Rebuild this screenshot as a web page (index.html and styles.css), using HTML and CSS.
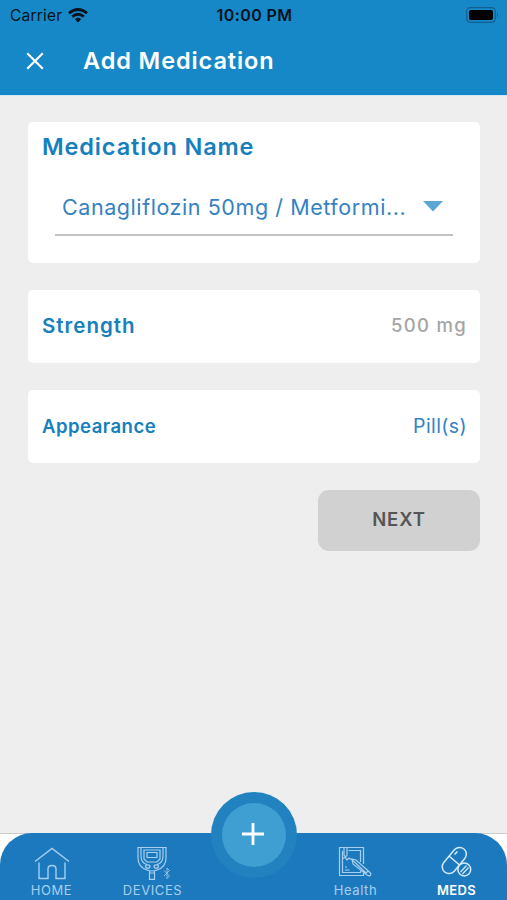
FILE: index.html
```html
<!DOCTYPE html>
<html lang="en">
<head>
  <meta charset="UTF-8" />
  <title>Add Medication</title>
  <link rel="stylesheet" href="styles.css">
</head>
<body>

  <header class="header">
    <div class="status-bar">
      <div class="carrier">
        <span>Carrier</span>
        <svg width="20" height="15" viewBox="0 0 20 15" fill="none" stroke="#06121c" stroke-width="2.8">
          <path d="M1 5.3Q10-2.3 19 5.3" />
          <path d="M4.2 8.8Q10 3.8 15.8 8.8" />
          <path d="M6.9 11.2Q10 8.4 13.1 11.2L10 14.5z" fill="#06121c" stroke="none" />
        </svg>
      </div>
      <span class="time">10:00 PM</span>
      <svg class="battery" width="33" height="16" viewBox="0 0 33 16">
        <rect x=".6" y=".6" width="28.8" height="14.8" rx="4" fill="none" stroke="#125f91" stroke-width="1.2" />
        <rect x="3" y="3" width="24" height="10" rx="2" fill="#000" />
        <path d="M31 5.5Q33 8 31 10.5z" fill="#125f91" />
      </svg>
    </div>
    <div class="title-bar">
      <svg class="close" width="18" height="18" viewBox="0 0 18 18" stroke="#fff" stroke-width="2.1">
        <path d="M1.2 1.2L16.8 16.8M16.8 1.2L1.2 16.8" />
      </svg>
      <h1>Add Medication</h1>
    </div>
  </header>

  <main class="content">
    <section class="card name-card">
      <h2>Medication Name</h2>
      <div class="select">
        <span>Canagliflozin 50mg / Metformi...</span>
        <svg width="20" height="11" viewBox="0 0 20 11"><path d="M0 0H20L10 10.5z" fill="#5ba6d5" /></svg>
      </div>
    </section>

    <section class="card row">
      <span class="label strength">Strength</span>
      <span class="value dose">500 mg</span>
    </section>

    <section class="card row">
      <span class="label appearance">Appearance</span>
      <span class="value pills">Pill(s)</span>
    </section>

    <button class="next">NEXT</button>
  </main>

  <div class="nav-wrap">
    <nav class="nav">
      <a class="tab home">
        <svg width="36" height="34" viewBox="0 0 36 34" stroke-width="1.4">
          <path d="M1 15.5L18 2.5L35 15.5M5 16.500V32.500H14V23Q14 19.500 18 19.500T22 23V32.500H31V16.500" />
        </svg>
        <span>HOME</span>
      </a>
      <a class="tab devices">
        <svg width="36" height="34" viewBox="0 0 36 34" stroke-width="1.2">
          <path d="M3 1.500H31V12Q31 21 22 24Q17 26 12 24Q3 21 3 12zM6 1.500V10Q6 17 12 18.500M28 1.500V10Q28 17 22 18.500" />
          <path d="M9 4H25V13L22 16H12L9 13zM12 6.500H22V11.500H12z" />
          <ellipse cx="12.800" cy="20.500" rx="2.200" ry="1.700" />
          <ellipse cx="21.200" cy="20.500" rx="2.200" ry="1.700" />
          <path d="M14.500 25V33.300H19.500V25M14.500 27H19.500" />
          <path d="M29 24.500L34.500 30L32 32.500V22L34.500 24.500L29 30" stroke-width=".8" />
        </svg>
        <span>DEVICES</span>
      </a>
      <a class="tab health">
        <svg width="36" height="34" viewBox="0 0 36 34" stroke-width="1.2">
          <path d="M25.500 18V1.500H1.500V29.500H25.500V27M22.500 16V4.500H10.500M4.500 5V26.500H22.500V25" />
          <path d="M6 1.500V9L7.500 11L9 9V1.500M4.500 12.500L7.500 11.500L9 14L11 12L13 13.500H16" />
          <path d="M14 13L18 14L32 26.500Q33.500 28 32.500 29.500Q31 30.500 29 29L15 18zM15 14.500L28 27M27 28L30 25" />
          <path d="M7 21H9M7 24H11.500" />
        </svg>
        <span>Health</span>
      </a>
      <a class="tab meds">
        <svg width="36" height="34" viewBox="0 0 36 34" stroke-width="1.5">
          <rect x="-6.800" y="-15" width="13.600" height="30" rx="6.800" transform="translate(15.300 14.500) rotate(40)" />
          <path d="M10 10L20.500 19M15.500 8.500L18.500 5.500" />
          <circle cx="25.300" cy="23.500" r="6.400" fill="#1d79bd" />
          <path d="M21.500 26L27.500 19.500M23.500 28L29.500 21.500" stroke-width="1.2" />
        </svg>
        <span>MEDS</span>
      </a>
    </nav>
    <div class="add">
      <div class="add-inner">
        <svg width="22" height="22" viewBox="0 0 22 22" stroke="#fff" stroke-width="2.8"><path d="M11 0V22M0 11H22" /></svg>
      </div>
    </div>
  </div>

</body>
</html>
```
FILE: styles.css
```css
* {
  box-sizing: border-box;
}

body {
  margin: 0;
  height: 900px;
  display: flex;
  flex-direction: column;
  background: #eee;
  font-family: Inter, "Liberation Sans", sans-serif;
  overflow: hidden;
}

.header {
  height: 96px;
  background: #1788c7;
  border-bottom: 1px solid #d5e8f2;
}

.status-bar {
  height: 30px;
  padding: 0 8px 0 10px;
  display: grid;
  grid-template-columns: 1fr auto 1fr;
  align-items: center;
  color: #06121c;
}

.carrier {
  display: flex;
  align-items: center;
  gap: 6px;
  font-size: 15.5px;
  letter-spacing: 0.2px;
}

.time {
  font-size: 16px;
  font-weight: 600;
  letter-spacing: 0.4px;
}

.battery {
  justify-self: end;
}

.title-bar {
  height: 62px;
  padding-left: 26px;
  display: flex;
  align-items: center;
}

h1 {
  margin: 0 0 2px 39px;
  font-size: 23.5px;
  font-weight: 600;
  letter-spacing: 0.9px;
  color: #fff;
}

.content {
  flex: 1;
  padding: 26px 27px 0 28px;
  display: flex;
  flex-direction: column;
  gap: 27px;
}

.card {
  background: #fff;
  border-radius: 5px;
}

.name-card {
  height: 141px;
  padding: 10px 27px 0 14px;
}

h2 {
  margin: 0;
  font-size: 23.5px;
  line-height: 30px;
  font-weight: 600;
  letter-spacing: 0.87px;
  color: #1580bd;
}

.select {
  height: 57px;
  margin: 17px 0 0 13px;
  padding: 0 10px 0 7px;
  display: flex;
  align-items: center;
  justify-content: space-between;
  border-bottom: 2px solid #c3c3c3;
  font-size: 21.5px;
  letter-spacing: 0.57px;
  white-space: nowrap;
  color: #3482c2;
}

.row {
  height: 73px;
  padding: 0 13px 2px 14px;
  display: flex;
  align-items: center;
  justify-content: space-between;
}

.label {
  font-weight: 600;
  color: #1580bd;
}

.strength {
  font-size: 20.5px;
  letter-spacing: 1px;
}

.appearance {
  font-size: 18.5px;
  letter-spacing: 0.5px;
}

.dose {
  padding-bottom: 2px;
  font-size: 18.5px;
  font-weight: 500;
  letter-spacing: 1.3px;
  color: #a5a5a5;
}

.pills {
  font-size: 19.5px;
  letter-spacing: 0.4px;
  color: #3482c2;
}

.next {
  align-self: flex-end;
  width: 162px;
  height: 61px;
  padding: 0 0 3px;
  border: none;
  border-radius: 11px;
  background: #d1d1d1;
  font-family: inherit;
  font-size: 18.5px;
  font-weight: 600;
  letter-spacing: 0.9px;
  color: #555;
}

.nav-wrap {
  position: relative;
  height: 67px;
  background: #fff;
  border-top: 1px solid #ccc;
}

.nav {
  height: 67px;
  margin-top: -1px;
  padding: 13px 0 0 1px;
  display: flex;
  background: #1d79bd;
  border-radius: 32px 32px 0 0;
}

.tab {
  width: 101px;
  display: flex;
  flex-direction: column;
  align-items: center;
  gap: 1px;
  font-size: 13px;
  line-height: 18px;
  letter-spacing: 0.6px;
  color: #a6cff0;
}

.tab svg {
  fill: none;
  stroke: #a6cff0;
}

.health {
  margin-left: auto;
}

.meds {
  font-weight: 600;
  letter-spacing: 0.3px;
  color: #fff;
}

.meds svg {
  stroke: #d5eafa;
}

/* round button sits over the top edge of the nav */
.add {
  position: absolute;
  left: 211px;
  top: -42px;
  width: 86px;
  height: 86px;
  display: flex;
  align-items: center;
  justify-content: center;
  border-radius: 50%;
  background: #2182bf;
}

.add-inner {
  width: 64px;
  height: 64px;
  padding: 0 2px 2px 0;
  display: flex;
  align-items: center;
  justify-content: center;
  border-radius: 50%;
  background: #409fd2;
}
```
